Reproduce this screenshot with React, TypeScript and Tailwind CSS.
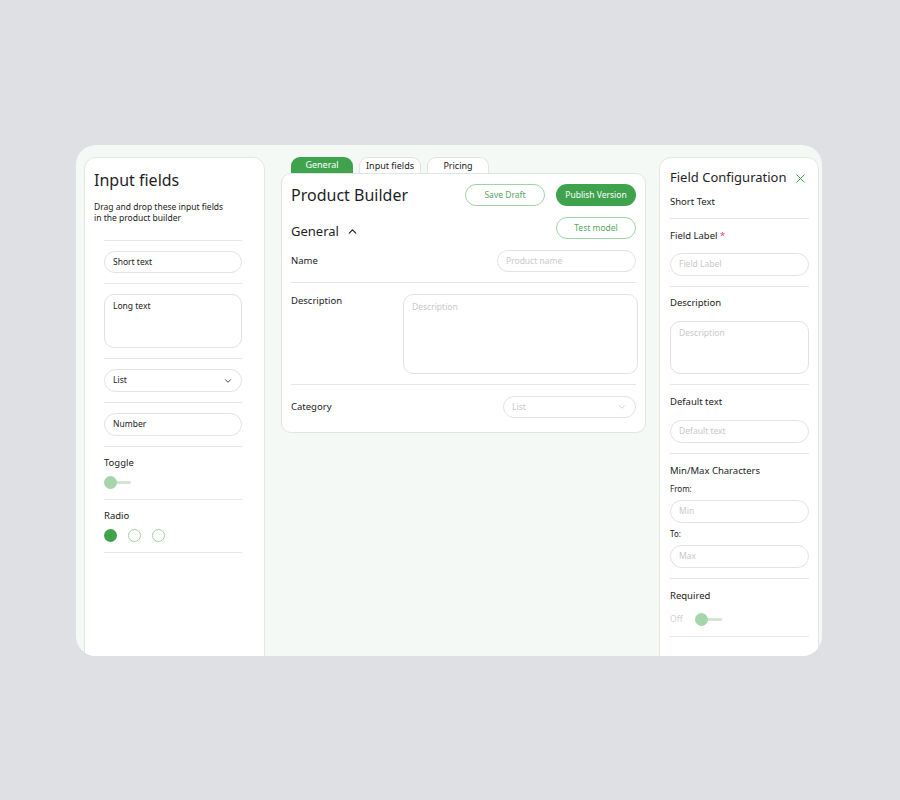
import { ChevronDown, ChevronUp, X } from 'lucide-react';

const font = { fontFamily: '"Noto Sans", "Open Sans", sans-serif' };

function Divider({ className = '' }: { className?: string }) {
  return <div className={`h-px bg-[#e6e6e6] ${className}`} />;
}

function Pill({ text, h = 'h-[23px]', muted = true, className = '' }: { text: string; h?: string; muted?: boolean; className?: string }) {
  return (
    <div className={`flex items-center whitespace-nowrap rounded-full border border-[#e2e2e2] bg-white px-[8px] text-[8.5px] ${muted ? 'text-[#c9c9c9]' : 'text-[#222]'} ${h} ${className}`}>
      {text}
    </div>
  );
}

function Toggle() {
  return (
    <div className="relative h-[13px] w-[27px]">
      <div className="absolute left-[6px] right-0 top-[5px] h-[3px] rounded-full bg-[#d3e6d5]" />
      <div className="absolute left-0 top-0 h-[13px] w-[13px] rounded-full bg-[#a6d5ab]" />
    </div>
  );
}

function LeftPanel() {
  return (
    <div className="h-[520px] w-[181px] shrink-0 rounded-t-[12px] border border-[#e4e6e4] bg-white px-[9px] pt-[10px]">
      <div className="whitespace-nowrap text-[16px] leading-[24px] text-[#1f1f1f]">Input fields</div>
      <div className="mt-[9px] text-[8.5px] leading-[11px] text-[#222]">
        Drag and drop these input fields
        <br />
        in the product builder
      </div>
      <div className="mx-[10px] w-[138px]">
        <Divider className="mt-[17px]" />
        <Pill text="Short text" h="h-[22px]" muted={false} className="mt-[10px]" />
        <Divider className="mt-[10px]" />
        <div className="mt-[10px] h-[54px] rounded-[10px] border border-[#e2e2e2] px-[8px] pt-[5px] text-[8.5px] text-[#222]">Long text</div>
        <Divider className="mt-[10px]" />
        <div className="mt-[10px] flex h-[23px] items-center justify-between rounded-full border border-[#e2e2e2] px-[8px] text-[8.5px] text-[#222]">
          <span>List</span>
          <ChevronDown size={10} strokeWidth={2.2} className="text-[#333]" />
        </div>
        <Divider className="mt-[10px]" />
        <Pill text="Number" muted={false} className="mt-[10px]" />
        <Divider className="mt-[10px]" />
        <div className="mt-[9px] text-[9.5px] leading-[14px] text-[#222]">Toggle</div>
        <div className="mt-[6px]">
          <Toggle />
        </div>
        <Divider className="mt-[10px]" />
        <div className="mt-[9px] text-[9.5px] leading-[14px] text-[#222]">Radio</div>
        <div className="mt-[6px] flex gap-[11px]">
          <div className="h-[13px] w-[13px] rounded-full bg-[#3fa34d]" />
          <div className="h-[13px] w-[13px] rounded-full border border-[#9fd3a5]" />
          <div className="h-[13px] w-[13px] rounded-full border border-[#9fd3a5]" />
        </div>
        <Divider className="mt-[10px]" />
      </div>
    </div>
  );
}

function Tab({ label, active }: { label: string; active?: boolean }) {
  return (
    <div
      className={`flex h-[16px] w-[62px] items-center justify-center whitespace-nowrap rounded-t-[9px] text-[9px] ${
        active ? 'bg-[#3fa34d] text-white' : 'border border-b-0 border-[#e2e2e2] bg-white text-[#222]'
      }`}
    >
      {label}
    </div>
  );
}

function CenterPanel() {
  return (
    <div className="ml-[16px] w-[365px] shrink-0">
      <div className="flex gap-[6px] pl-[10px]">
        <Tab label="General" active />
        <Tab label="Input fields" />
        <Tab label="Pricing" />
      </div>
      <div className="h-[260px] rounded-[10px] border border-[#e2e4e2] bg-white px-[9px] pt-[10px]">
        <div className="flex h-[22px] items-center justify-between">
          <div className="whitespace-nowrap text-[16px] text-[#1f1f1f]">Product Builder</div>
          <div className="flex gap-[11px]">
            <div className="flex h-[22px] w-[80px] items-center justify-center rounded-full border border-[#9fd3a5] text-[8.5px] text-[#55a85f]">Save Draft</div>
            <div className="flex h-[22px] w-[80px] items-center justify-center rounded-full bg-[#3fa34d] text-[8.5px] text-white">Publish Version</div>
          </div>
        </div>
        <div className="mt-[11px] flex h-[22px] items-center justify-between">
          <div className="flex items-center gap-[7px] pt-[7px] text-[13px] text-[#1f1f1f]">
            General
            <ChevronUp size={13} strokeWidth={2.2} />
          </div>
          <div className="flex h-[22px] w-[80px] items-center justify-center rounded-full border border-[#9fd3a5] text-[8.5px] text-[#55a85f]">Test model</div>
        </div>
        <div className="mt-[11px] flex h-[22px] items-center justify-between">
          <div className="pt-[1px] text-[9.5px] text-[#222]">Name</div>
          <Pill text="Product name" h="h-[22px]" className="w-[139px]" />
        </div>
        <Divider className="mt-[10px]" />
        <div className="mt-[10px] flex justify-between">
          <div className="pt-[1px] text-[9.5px] leading-[14px] text-[#222]">Description</div>
          <div className="-mr-[2px] mt-[1px] h-[80px] w-[235px] rounded-[10px] border border-[#e2e2e2] px-[8px] pt-[6px] text-[8.5px] text-[#c9c9c9]">Description</div>
        </div>
        <Divider className="mt-[10px]" />
        <div className="mt-[11px] flex h-[22px] items-center justify-between">
          <div className="text-[9.5px] text-[#222]">Category</div>
          <div className="flex h-[22px] w-[133px] items-center justify-between rounded-full border border-[#e2e2e2] px-[8px] text-[8.5px] text-[#c9c9c9]">
            <span>List</span>
            <ChevronDown size={10} className="text-[#c9c9c9]" />
          </div>
        </div>
      </div>
    </div>
  );
}

function RightPanel() {
  return (
    <div className="ml-[13px] h-[520px] w-[160px] shrink-0 rounded-t-[12px] border border-[#e4e6e4] bg-white pl-[10px] pr-[9px] pt-[10px]">
      <div className="flex h-[20px] items-center justify-between">
        <div className="whitespace-nowrap text-[13px] text-[#1f1f1f]">Field Configuration</div>
        <X size={15} strokeWidth={1.6} color="#3fa34d" className="mr-[1px]" />
      </div>
      <div className="mt-[7px] text-[9.5px] leading-[14px] text-[#222]">Short Text</div>
      <Divider className="mt-[9px]" />
      <div className="mt-[10px] text-[9.5px] leading-[14px] text-[#222]">
        Field Label <span className="text-[#e8475f]">*</span>
      </div>
      <Pill text="Field Label" className="mt-[10px]" />
      <Divider className="mt-[10px]" />
      <div className="mt-[9px] text-[9.5px] leading-[14px] text-[#222]">Description</div>
      <div className="mt-[11px] h-[53px] rounded-[10px] border border-[#e2e2e2] px-[8px] pt-[5px] text-[8.5px] text-[#c9c9c9]">Description</div>
      <Divider className="mt-[10px]" />
      <div className="mt-[10px] text-[9.5px] leading-[14px] text-[#222]">Default text</div>
      <Pill text="Default text" className="mt-[11px]" />
      <Divider className="mt-[10px]" />
      <div className="mt-[10px] whitespace-nowrap text-[9.5px] leading-[14px] text-[#222]">Min/Max Characters</div>
      <div className="mt-[5px] text-[8px] leading-[12px] text-[#222]">From:</div>
      <Pill text="Min" className="mt-[5px]" />
      <div className="mt-[5px] text-[8px] leading-[12px] text-[#222]">To:</div>
      <Pill text="Max" className="mt-[5px]" />
      <Divider className="mt-[10px]" />
      <div className="mt-[10px] text-[9.5px] leading-[14px] text-[#222]">Required</div>
      <div className="mt-[10px] flex h-[13px] items-center gap-[12px]">
        <span className="text-[8.5px] text-[#d0d0d0]">Off</span>
        <Toggle />
      </div>
      <Divider className="mt-[10px]" />
    </div>
  );
}

export default function App() {
  return (
    <div className="h-[800px] w-[900px] bg-[#dfe0e4] pt-[145px]" style={font}>
      <div className="ml-[76px] h-[511px] w-[746px] overflow-hidden rounded-[20px] bg-[#f4f9f5]">
        <div className="flex pl-[8px] pt-[12px]">
          <LeftPanel />
          <CenterPanel />
          <RightPanel />
        </div>
      </div>
    </div>
  );
}
